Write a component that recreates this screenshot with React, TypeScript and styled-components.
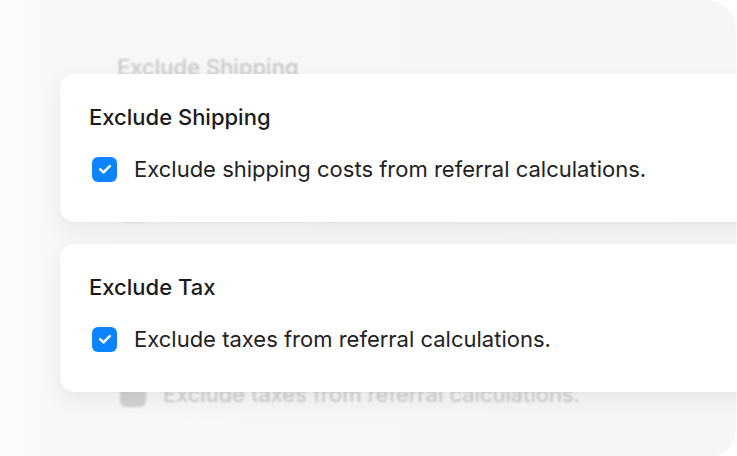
import styled, { createGlobalStyle } from "styled-components";

const GlobalStyle = createGlobalStyle`
  html, body {
    margin: 0;
    padding: 0;
    background: #ffffff;
  }
  body {
    font-family: Inter, "Noto Sans", "Liberation Sans", sans-serif;
    -webkit-font-smoothing: antialiased;
  }
`;

const Stage = styled.div`
  position: relative;
  width: 737px;
  height: 456px;
  overflow: hidden;
  background: #ffffff;
`;

const Backdrop = styled.div`
  position: absolute;
  top: 0;
  left: -30px;
  right: 1px;
  bottom: -2px;
  border-radius: 30px;
  background: linear-gradient(90deg, #ffffff 0px, #f7f7f8 90px, #f6f6f7 100%);
  overflow: hidden;
`;

const GhostContent = styled.div`
  display: flex;
  flex-direction: column;
  padding: 54px 0 0 147px;
  filter: blur(1.3px);
  color: #c8c8ca;
`;

const GhostTitle = styled.div`
  font-size: 22px;
  font-weight: 450;
  line-height: 26px;
`;

const GhostRow = styled.div<{ $offset: number }>`
  display: flex;
  align-items: center;
  gap: 17px;
  margin-top: ${({ $offset }) => $offset}px;
  margin-left: 3px;
  font-size: 22px;
  line-height: 26px;
`;

const GhostBox = styled.div`
  width: 26px;
  height: 26px;
  border-radius: 6px;
  background: #d2d2d4;
  flex-shrink: 0;
`;

const CardStack = styled.div`
  position: absolute;
  top: 74px;
  left: 60px;
  right: -40px;
  display: flex;
  flex-direction: column;
  gap: 22px;
`;

const Card = styled.div`
  height: 148px;
  box-sizing: border-box;
  padding: 30px 29px 0;
  background: #ffffff;
  border-radius: 14px;
  box-shadow: 0 8px 24px rgba(0, 0, 0, 0.06), 0 1px 3px rgba(0, 0, 0, 0.03);
  display: flex;
  flex-direction: column;
  gap: 26px;
`;

const CardTitle = styled.div`
  font-size: 22px;
  font-weight: 450;
  line-height: 26px;
  color: #1b1b1d;
`;

const Row = styled.label`
  display: flex;
  align-items: center;
  gap: 17px;
  margin-left: 3px;
  font-size: 22px;
  line-height: 26px;
  color: #222224;
`;

const Box = styled.span`
  width: 25px;
  height: 25px;
  border-radius: 6px;
  background: #0b84fe;
  display: flex;
  align-items: center;
  justify-content: center;
  flex-shrink: 0;
`;

const Check = ({ color = "#ffffff" }: { color?: string }) => (
  <svg width="18" height="18" viewBox="0 0 16 16" fill="none">
    <path
      d="M3.8 8.3 L6.7 11 L12.2 5.5"
      stroke={color}
      strokeWidth="2.3"
      strokeLinecap="round"
      strokeLinejoin="round"
    />
  </svg>
);

const settings = [
  {
    title: "Exclude Shipping",
    label: "Exclude shipping costs from referral calculations.",
  },
  {
    title: "Exclude Tax",
    label: "Exclude taxes from referral calculations.",
  },
];

export default function App() {
  return (
    <>
      <GlobalStyle />
      <Stage>
        <Backdrop>
          <GhostContent>
            <GhostTitle>Exclude Shipping</GhostTitle>
            <GhostRow $offset={116}>
              <GhostBox />
              <span>Exclude shipping costs from referral calculations.</span>
            </GhostRow>
            <GhostRow $offset={159}>
              <GhostBox />
              <span>Exclude taxes from referral calculations.</span>
            </GhostRow>
          </GhostContent>
        </Backdrop>
        <CardStack>
          {settings.map((s) => (
            <Card key={s.title}>
              <CardTitle>{s.title}</CardTitle>
              <Row>
                <Box>
                  <Check />
                </Box>
                <span>{s.label}</span>
              </Row>
            </Card>
          ))}
        </CardStack>
      </Stage>
    </>
  );
}
